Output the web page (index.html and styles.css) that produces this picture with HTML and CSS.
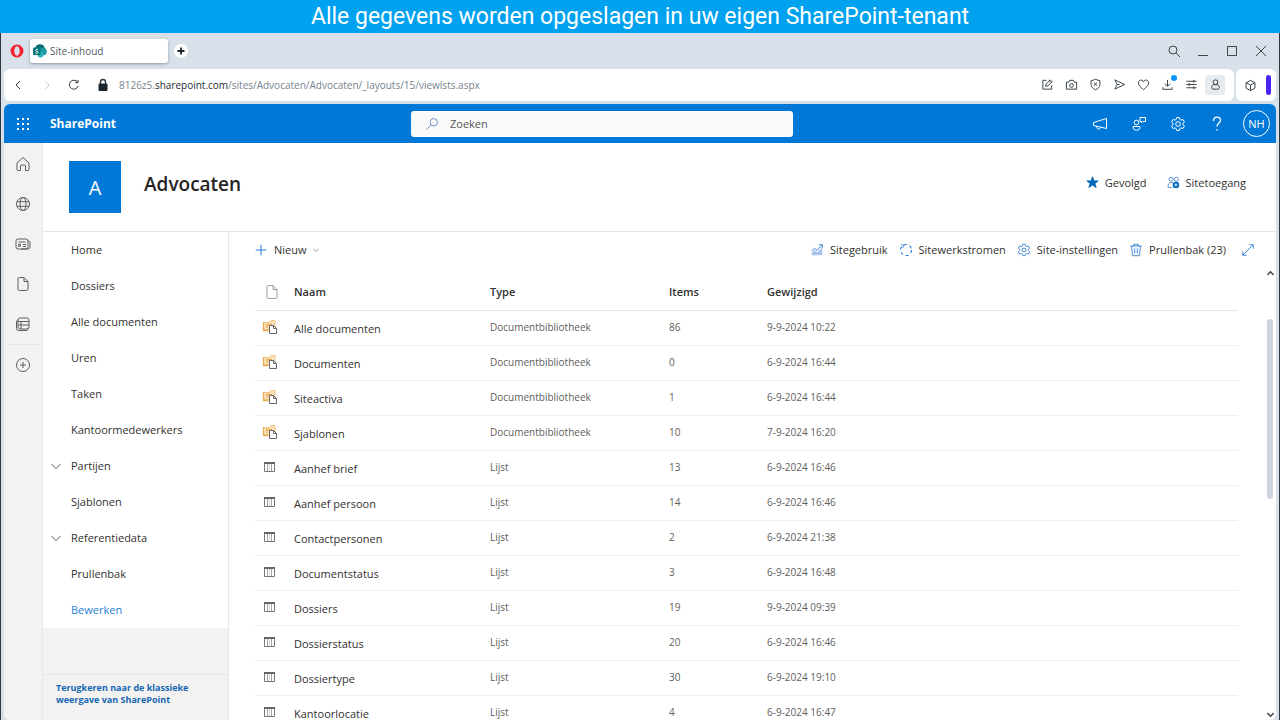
FILE: index.html
```html
<!DOCTYPE html>
<html lang="nl">
<head>
<meta charset="utf-8">
<title>Site-inhoud</title>
<link rel="stylesheet" href="styles.css">
</head>
<body>
<svg class="sprite" aria-hidden="true">
  <symbol id="library" viewBox="0 0 16 16">
    <path d="M1.500 3.500h6l1.500-2h4v9h-11.500z" fill="#fbe3bd" stroke="#f0c583"/>
    <path d="M1.500 3v8.500h5M5 9V5.500h5M7 7.500h3" fill="none" stroke="#e9ad55" stroke-width="1.300"/>
    <path d="M7.500 6.500h4l3 3v5h-7z" fill="#fff" stroke="#666"/>
    <path d="M11.500 6.500v3h3" fill="none" stroke="#666"/>
  </symbol>
  <symbol id="list" viewBox="0 0 16 16">
    <path d="M2.500 3.500h10v9h-10z" fill="#fff" stroke="#777"/>
    <path d="M2 3h11v2H2z" fill="#666" stroke="none"/>
    <path d="M5.500 5v7M9.500 5v7" stroke="#a5a5a5"/>
    <path d="M7.500 5v7" stroke="#dcdcdc"/>
  </symbol>
  <symbol id="page" viewBox="0 0 16 16">
    <path d="M4.500 1.500h4.500l4 4v7.500a1.500 1.500 0 0 1-1.500 1.500h-7A1.500 1.500 0 0 1 3 13V3a1.500 1.500 0 0 1 1.500-1.500zM9 1.500V5.500h4"/>
  </symbol>
  <symbol id="chevron" viewBox="0 0 10 10"><path d="M.5 3l4.500 4.500L9.500 3"/></symbol>
  <symbol id="gear" viewBox="0 0 16 16">
    <path d="M6.700 1.500h2.600l.5 1.900 1.300.7 1.900-.6 1.400 2.300-1.300 1.400v1.600l1.300 1.400-1.400 2.300-1.900-.6-1.300.7-.5 1.900H6.700l-.5-1.900-1.300-.7-1.900.6-1.400-2.300 1.300-1.400V7.200L1.600 5.800 3 3.500l1.900.6 1.300-.7z"/><circle cx="8" cy="8" r="2.300"/>
  </symbol>
</svg>

<header class="banner">Alle gegevens worden opgeslagen in uw eigen SharePoint-tenant</header>

<div class="window">
  <div class="tabbar">
    <svg class="opera" viewBox="0 0 14 14"><path fill-rule="evenodd" d="M7 .5a6.500 6.500 0 1 0 0 13a6.500 6.500 0 1 0 0-13zM7 2.300c1.600 0 2.700 2.100 2.700 4.700S8.600 11.700 7 11.700 4.300 9.600 4.300 7 5.400 2.300 7 2.300z" fill="#f5222f" stroke="none"/></svg>
    <button class="tab">
      <svg viewBox="0 0 14 14" stroke="none"><circle cx="7" cy="5" r="4.800" fill="#036c70" stroke="none"/><circle cx="10" cy="7.500" r="3.800" fill="#1a9ba1" stroke="none"/><circle cx="7.500" cy="10.500" r="3" fill="#2bb3bb" stroke="none"/><rect x="0" y="3.500" width="7.500" height="7.500" rx="1" fill="#03787c" stroke="none"/><path d="M5.200 5.700C4.400 5.200 2.700 5.300 2.700 6.300c0 1.200 2.300.8 2.300 2 0 1-1.500 1.100-2.500.5" stroke="#fff"/></svg>
      <span>Site-inhoud</span>
    </button>
    <button class="newtab" aria-label="Nieuw tabblad"><svg viewBox="0 0 10 10"><path d="M5 1.500v7M1.500 5h7" stroke="#1c262f" stroke-width="1.800"/></svg></button>
    <div class="winctl">
      <button aria-label="Zoeken in tabbladen"><svg viewBox="0 0 14 14"><circle cx="6" cy="6" r="4"/><path d="M9 9l4 4"/></svg></button>
      <button aria-label="Minimaliseren"><svg viewBox="0 0 14 14"><path d="M2 11.500h10"/></svg></button>
      <button aria-label="Maximaliseren"><svg viewBox="0 0 14 14"><path d="M2.500 2.500h9v9h-9z"/></svg></button>
      <button aria-label="Sluiten"><svg viewBox="0 0 14 14"><path d="M2 2l10 10M12 2L2 12"/></svg></button>
    </div>
  </div>

  <div class="addressrow">
    <div class="address">
      <button aria-label="Terug"><svg viewBox="0 0 14 14"><path d="M9 3L5 7l4 4"/></svg></button>
      <button class="dim" aria-label="Vooruit"><svg viewBox="0 0 14 14"><path d="M5 3l4 4-4 4"/></svg></button>
      <button aria-label="Vernieuwen"><svg viewBox="0 0 14 14"><path d="M10.500 4A4.500 4.500 0 1 0 11.200 8M11 2v2.700H8.300"/></svg></button>
      <svg class="lock" viewBox="0 0 14 14"><path d="M3 6h8v6.500H3z" fill="#1c262f" stroke="#1c262f" stroke-linejoin="round"/><path d="M4.500 6V4a2.500 2.500 0 0 1 5 0v2" stroke-width="1.400"/></svg>
      <span class="url">8126z5.<b>sharepoint.com</b>/sites/Advocaten/Advocaten/_layouts/15/viewlsts.aspx</span>
      <div class="tools">
        <button aria-label="Notitie"><svg viewBox="0 0 14 14"><path d="M6 2.500H2v9.500h9.500V8M5 9l.5-2.500 4.500-4.500 2 2-4.500 4.500zM9 3l2 2"/></svg></button>
        <button aria-label="Momentopname"><svg viewBox="0 0 14 14"><path d="M1.500 4.500H4L5 2.500h4l1 2h2.500v7.500h-11z" stroke-linejoin="round"/><circle cx="7" cy="8" r="2"/></svg></button>
        <button aria-label="Bescherming"><svg viewBox="0 0 14 14"><path d="M7 1.500L11.800 3v4c0 3-2.500 4.700-4.800 5.700C4.700 11.700 2.200 10 2.200 7V3zM5.300 5l3.400 3.400M8.700 5L5.300 8.400"/></svg></button>
        <button aria-label="Delen"><svg viewBox="0 0 14 14"><path d="M2 2l10.500 5L2 12l2.500-5zM4.500 7H7" stroke-linejoin="round"/></svg></button>
        <button aria-label="Favoriet"><svg viewBox="0 0 14 14"><path d="M7 12.500C4 10 1.500 8 1.500 5.200c0-3.200 4-4.200 5.500-1.200 1.500-3 5.500-2 5.500 1.200C12.500 8 10 10 7 12.500z"/></svg></button>
        <button class="download" aria-label="Downloads"><svg viewBox="0 0 14 14"><path d="M7 2v6.500M4 6l3 3 3-3M2 10v2.200h10V10"/></svg></button>
        <button aria-label="Instellingen"><svg viewBox="0 0 14 14"><path d="M1.500 3.500h11M1.500 7h11M1.500 10.500h11M9.500 2v3M4.500 5.500v3M9.500 9v3"/></svg></button>
        <button class="profile" aria-label="Profiel"><svg viewBox="0 0 14 14"><circle cx="7" cy="4.500" r="2.500"/><path d="M4.500 7.200h5c2.200 1.300 2 4.800 0 4.800h-5c-2 0-2.200-3.500 0-4.800z"/></svg></button>
      </div>
    </div>
    <div class="extras">
      <button aria-label="Extensies"><svg viewBox="0 0 14 14"><path d="M7 1.500l4.800 2.500v5.800L7 12.500 2.200 9.800V4zM2.200 4L7 6.500 11.800 4M7 6.500v6" stroke-linejoin="round"/></svg></button>
      <span class="strip"></span>
    </div>
  </div>

  <div class="app">
    <div class="suite">
      <button class="waffle" aria-label="Apps"><svg viewBox="0 0 14 14"><path fill="#fff" stroke="none" d="M1 1h2v2H1zM6 1h2v2H6zM11 1h2v2h-2zM1 6h2v2H1zM6 6h2v2H6zM11 6h2v2h-2zM1 11h2v2H1zM6 11h2v2H6zM11 11h2v2h-2z"/></svg></button>
      <a class="brand" href="#">SharePoint</a>
      <label class="search">
        <svg viewBox="0 0 16 16"><circle cx="10" cy="6" r="4.200"/><path d="M7 9l-5.500 5.500"/></svg>
        <input type="search" placeholder="Zoeken" aria-label="Zoeken">
      </label>
      <div class="suite-actions">
        <button aria-label="Aankondigingen"><svg viewBox="0 0 16 16"><path d="M14.500 2.500v10L1.500 9.500v-3zM4.500 10.500c0 3 3.500 3.500 4 1" stroke-linejoin="round"/></svg></button>
        <button aria-label="Feedback"><svg viewBox="0 0 16 16"><circle cx="5.500" cy="6.500" r="2.300"/><path d="M2 10.500h7c.8 5-7.800 5-7 0zM9 1.500h5.500v4H12l-1.500 1.500V5.500H9z"/></svg></button>
        <button aria-label="Instellingen"><svg viewBox="0 0 16 16"><use href="#gear"/></svg></button>
        <button aria-label="Help"><svg viewBox="0 0 16 16"><path d="M4.500 5c0-5 7-5 7-.8 0 2.800-3.500 3-3.500 6.300M8 13v1.500" stroke-width="1.300"/></svg></button>
        <button class="avatar">NH</button>
      </div>
    </div>

    <div class="body">
      <nav class="rail" aria-label="Apps">
        <a href="#" aria-label="Start"><svg viewBox="0 0 16 16"><path d="M2 7l6-5.500L14 7v6.500a1 1 0 0 1-1 1h-2.500V10a1 1 0 0 0-1-1h-3a1 1 0 0 0-1 1v4.500H3a1 1 0 0 1-1-1z"/></svg></a>
        <a href="#" aria-label="Sites"><svg viewBox="0 0 16 16"><circle cx="8" cy="8" r="6.500"/><ellipse cx="8" cy="8" rx="3" ry="6.500"/><path d="M2 5.700h12M2 10.300h12"/></svg></a>
        <a href="#" aria-label="Nieuws"><svg viewBox="0 0 16 16"><rect x="1" y="3" width="12" height="10" rx="2"/><path d="M13 5h.5A1.500 1.500 0 0 1 15 6.500V11a2 2 0 0 1-2 2H6M3.500 6h7M8 8.500h3M8 10.500h3M3.500 8.300h2v2h-2z"/></svg></a>
        <a href="#" aria-label="Bestanden"><svg viewBox="0 0 16 16"><use href="#page"/></svg></a>
        <a href="#" aria-label="Lijsten"><svg viewBox="0 0 16 16"><rect x="3" y="2" width="11" height="11" rx="2"/><path d="M3 5.500h11M3 9h11M6 5.500V13M3 4a2 2 0 0 0-1.500 2v6.500a2 2 0 0 0 2 2H11a2 2 0 0 0 2-1.500"/></svg></a>
        <a class="create" href="#" aria-label="Maken"><svg viewBox="0 0 16 16"><circle cx="8" cy="8" r="6.500"/><path d="M8 5v6M5 8h6"/></svg></a>
      </nav>

      <div class="site">
        <div class="sitehead">
          <div class="logo">A</div>
          <h1>Advocaten</h1>
          <div class="siteactions">
            <button><svg viewBox="0 0 16 16"><path d="M8 1l2 5h5l-4 3.200 1.500 5L8 11.200l-4.500 3 1.500-5L1 6h5z" fill="#0067b8" stroke="#0067b8"/></svg>Gevolgd</button>
            <button><svg viewBox="0 0 16 16"><circle cx="5" cy="4" r="2.500"/><circle cx="11.500" cy="4" r="2.500"/><path d="M6.500 14H1.500c-1-3.500 1-6 4-6 1 0 2 .3 2.500 1"/><circle cx="11" cy="11" r="4" fill="#0067b8" stroke="none"/><path d="M11 9v4M9 11h4" stroke="#fff"/></svg>Sitetoegang</button>
          </div>
        </div>

        <div class="columns">
          <aside class="side">
            <nav class="sidenav" aria-label="Site">
              <a href="#">Home</a>
              <a href="#">Dossiers</a>
              <a href="#">Alle documenten</a>
              <a href="#">Uren</a>
              <a href="#">Taken</a>
              <a href="#">Kantoormedewerkers</a>
              <a href="#"><svg><use href="#chevron"/></svg>Partijen</a>
              <a href="#">Sjablonen</a>
              <a href="#"><svg><use href="#chevron"/></svg>Referentiedata</a>
              <a href="#">Prullenbak</a>
              <a class="edit" href="#">Bewerken</a>
            </nav>
            <div class="classic"><a href="#">Terugkeren naar de klassieke weergave van SharePoint</a></div>
          </aside>

          <main class="main">
            <div class="commands">
              <button class="new"><svg viewBox="0 0 16 16"><path d="M8 2v12M2 8h12" stroke-width="1.200"/></svg>Nieuw<svg class="caret"><use href="#chevron"/></svg></button>
              <div class="commands-right">
                <button><svg viewBox="0 0 16 16"><path d="M2 14V11l3-3 3 2.500L14 5v9z" fill="#a9c3ef" stroke="none"/><path d="M2 9l3-3 3 2.500L14 2M10 2h4v4"/></svg>Sitegebruik</button>
                <button><svg viewBox="0 0 16 16"><circle cx="8" cy="8" r="6.300" stroke-width="1.300" stroke-dasharray="3.600 3"/><path d="M2.500 1.500L5.500 2.500 4.500 5.500"/></svg>Sitewerkstromen</button>
                <button><svg viewBox="0 0 16 16"><use href="#gear"/></svg>Site-instellingen</button>
                <button><svg viewBox="0 0 16 16"><path d="M1.500 3.500h13M5.500 3.500v-2h5v2M3 3.500l1 11h8l1-11M6.500 6v6M9.500 6v6"/></svg>Prullenbak (23)</button>
                <button class="expand" aria-label="Uitvouwen"><svg viewBox="0 0 16 16"><path d="M2 14L14 2M9.500 2H14v4.500M2 9.500V14h4.500"/></svg></button>
              </div>
            </div>
            <div class="scroller">
              <table>
                <thead><tr><th class="c-icon"><svg class="pageicon"><use href="#page"/></svg></th><th class="c-name">Naam</th><th class="c-type">Type</th><th class="c-items">Items</th><th>Gewijzigd</th></tr></thead>
                <tbody>
                  <tr><td><svg><use href="#library"/></svg></td><td><a href="#">Alle documenten</a></td><td>Documentbibliotheek</td><td>86</td><td>9-9-2024 10:22</td></tr>
                  <tr><td><svg><use href="#library"/></svg></td><td><a href="#">Documenten</a></td><td>Documentbibliotheek</td><td>0</td><td>6-9-2024 16:44</td></tr>
                  <tr><td><svg><use href="#library"/></svg></td><td><a href="#">Siteactiva</a></td><td>Documentbibliotheek</td><td>1</td><td>6-9-2024 16:44</td></tr>
                  <tr><td><svg><use href="#library"/></svg></td><td><a href="#">Sjablonen</a></td><td>Documentbibliotheek</td><td>10</td><td>7-9-2024 16:20</td></tr>
                  <tr><td><svg><use href="#list"/></svg></td><td><a href="#">Aanhef brief</a></td><td>Lijst</td><td>13</td><td>6-9-2024 16:46</td></tr>
                  <tr><td><svg><use href="#list"/></svg></td><td><a href="#">Aanhef persoon</a></td><td>Lijst</td><td>14</td><td>6-9-2024 16:46</td></tr>
                  <tr><td><svg><use href="#list"/></svg></td><td><a href="#">Contactpersonen</a></td><td>Lijst</td><td>2</td><td>6-9-2024 21:38</td></tr>
                  <tr><td><svg><use href="#list"/></svg></td><td><a href="#">Documentstatus</a></td><td>Lijst</td><td>3</td><td>6-9-2024 16:48</td></tr>
                  <tr><td><svg><use href="#list"/></svg></td><td><a href="#">Dossiers</a></td><td>Lijst</td><td>19</td><td>9-9-2024 09:39</td></tr>
                  <tr><td><svg><use href="#list"/></svg></td><td><a href="#">Dossierstatus</a></td><td>Lijst</td><td>20</td><td>6-9-2024 16:46</td></tr>
                  <tr><td><svg><use href="#list"/></svg></td><td><a href="#">Dossiertype</a></td><td>Lijst</td><td>30</td><td>6-9-2024 19:10</td></tr>
                  <tr><td><svg><use href="#list"/></svg></td><td><a href="#">Kantoorlocatie</a></td><td>Lijst</td><td>4</td><td>6-9-2024 16:47</td></tr>
                </tbody>
              </table>
              <div class="scrollbar">
                <svg class="up"><use href="#chevron"/></svg>
                <span class="thumb"></span>
                <svg class="down"><use href="#chevron"/></svg>
              </div>
            </div>
          </main>
        </div>
      </div>
    </div>
  </div>
</div>
</body>
</html>
```
FILE: styles.css
```css
* { box-sizing: border-box; }
body {
  margin: 0;
  height: 100vh;
  display: flex;
  flex-direction: column;
  overflow: hidden;
  font-family: "Open Sans", "Noto Sans", sans-serif;
  font-size: 11px;
  color: #323130;
}
button { border: 0; background: none; padding: 0; font: inherit; color: inherit; display: flex; align-items: center; justify-content: center; }
a { color: inherit; text-decoration: none; }
svg { width: 14px; height: 14px; flex: none; fill: none; stroke: currentColor; display: block; }
.sprite { position: absolute; width: 0; height: 0; }

.banner {
  flex: none;
  height: 33px;
  background: #00a2ef;
  color: #fff;
  font-family: Roboto, sans-serif;
  font-size: 23px;
  line-height: 33px;
  text-align: center;
}

.window {
  flex: 1;
  min-height: 0;
  display: flex;
  flex-direction: column;
  background: #d8e1e9;
  border: solid #2f3740;
  border-width: 0 1px;
  padding: 0 3px;
}
.tabbar { flex: none; height: 36px; display: flex; align-items: center; padding: 0 1px 0 6px; }
.tab {
  width: 138px;
  height: 24px;
  margin: 0 6px;
  padding: 0 3px;
  gap: 3px;
  justify-content: flex-start;
  background: #fff;
  border-radius: 3px;
  box-shadow: 0 1px 3px #8b98a5;
  color: #555b62;
  font-size: 10px;
}
.newtab { width: 14px; height: 14px; border-radius: 50%; background: #fff; }
.newtab svg { width: 10px; height: 10px; }
.winctl { margin-left: auto; display: flex; gap: 1px; color: #3c444c; }
.winctl button { width: 28px; height: 24px; }

.addressrow { flex: none; height: 32px; display: flex; gap: 2px; color: #30383f; }
.address { flex: 1; display: flex; align-items: center; background: #fff; border-radius: 6px; padding: 0 9px 1px 0; }
.address > button { width: 28px; height: 24px; }
.address .dim { color: #c3c8cd; width: 30px; }
.address > button:nth-child(3) { width: 24px; }
.lock { margin: 0 9px 0 10px; }
.url { color: #75838f; font-size: 10px; }
.url b { font-weight: 400; color: #222b33; }
.tools { margin-left: auto; display: flex; align-items: center; gap: 4px; }
.tools button { width: 20px; height: 20px; }
.tools svg, .extras svg { width: 13px; height: 13px; }
.tools .profile { background: #e6ebef; border-radius: 3px; }
.download { position: relative; }
.download::after { content: ""; position: absolute; right: 0; top: 0; width: 6px; height: 6px; border-radius: 50%; background: #0a95ff; }
.extras { width: 40px; display: flex; align-items: center; justify-content: space-between; background: #fff; border-radius: 6px; padding: 0 5px 0 8px; }
.strip { width: 5px; height: 20px; border-radius: 3px; background: #4b22f4; }

.app { flex: 1; min-height: 0; margin-top: 3px; display: flex; flex-direction: column; border-radius: 6px; overflow: hidden; background: #fff; }
.suite { flex: none; height: 39px; display: grid; grid-template-columns: 46px minmax(80px, 361px) minmax(120px, 382px) 1fr; align-items: center; background: #0078d7; color: #fff; }
.waffle { width: 38px; height: 38px; }
.brand { font-size: 12px; font-weight: 700; }
.search { height: 26px; display: flex; align-items: center; gap: 11px; padding: 0 14px; background: #fafafa; border-radius: 3px; color: #5b82c4; }
.search input { flex: 1; min-width: 0; border: 0; padding: 0; outline: 0; background: none; font: inherit; color: #555; }
.search input::placeholder { color: #555; opacity: 1; }
.suite-actions { display: flex; justify-content: flex-end; align-items: center; gap: 9px; padding-right: 6px; }
.suite-actions button { width: 30px; height: 30px; }
.suite-actions svg { width: 16px; height: 16px; }
.suite-actions .avatar { width: 27px; height: 27px; border: 1px solid #fff; border-radius: 50%; margin-left: 2px; }

.body { flex: 1; min-height: 0; display: flex; }
.rail { flex: none; width: 39px; background: #f3f2f1; color: #605e5c; border-right: 1px solid #eae9e8; }
.rail a { height: 40px; display: flex; align-items: center; justify-content: center; padding-top: 1px; }
.rail svg { width: 16px; height: 16px; }
.rail .create { margin: 1px 3px 0; border-top: 1px solid #e8e6e4; }
.site { flex: 1; min-width: 0; display: flex; flex-direction: column; }
.sitehead { flex: none; height: 89px; display: flex; align-items: center; padding: 0 30px 0 26px; border-bottom: 1px solid #e5e4e3; }
.logo { width: 52px; height: 52px; background: #0078d7; color: #fff; font-size: 20px; line-height: 54px; text-align: center; }
h1 { margin: 0 0 6px 23px; font-size: 19px; font-weight: 600; line-height: 26px; color: #252423; }
.siteactions { margin: 0 0 10px auto; display: flex; gap: 20px; }
.siteactions button { gap: 6px; }
.siteactions svg { width: 13px; height: 13px; color: #3d7cc9; }

.columns { flex: 1; min-height: 0; display: flex; }
.side { flex: none; width: 186px; display: flex; flex-direction: column; background: #f3f2f1; border-right: 1px solid #eae9e8; }
.sidenav { background: #fff; }
.sidenav a { height: 36px; display: flex; align-items: center; padding: 0 0 1px 28px; position: relative; }
.sidenav svg { position: absolute; left: 8px; width: 10px; height: 10px; color: #605e5c; }
.sidenav .edit { color: #1f7fd9; }
.classic { margin-top: auto; height: 46px; border-top: 1px solid #e6e5e4; padding: 7px 13px; font-size: 9px; line-height: 12px; font-weight: 700; color: #1466b3; }

.main { flex: 1; min-width: 0; display: flex; flex-direction: column; }
.commands { flex: none; height: 35px; display: flex; align-items: center; justify-content: space-between; padding: 0 21px 0 25px; }
.commands svg { color: #2b7cd3; }
.commands button { gap: 6px; }
.commands .caret { width: 6px; height: 6px; color: #605e5c; }
.commands-right { display: flex; gap: 11px; }
.commands .expand { margin-left: 4px; }
.scroller { flex: 1; min-height: 0; display: flex; justify-content: space-between; }
table { flex: 1; align-self: flex-start; margin: 7px 0 0 26px; border-collapse: collapse; table-layout: fixed; width: 100%; }
th, td { height: 35px; padding: 0; text-align: left; vertical-align: top; border-bottom: 1px solid #f0efee; line-height: 15px; }
th { height: 36px; padding-top: 10px; font-weight: 600; border-color: #e8e7e6; }
td { padding-top: 9px; font-size: 10px; color: #605e5c; }
td:first-child { padding: 8px 0 0 7px; }
td:first-child svg { width: 16px; height: 16px; }
td:nth-child(2) { padding-top: 10px; font-size: 11px; color: #323130; }
th.c-icon { width: 39px; padding-left: 9px; }
.pageicon { color: #a09e9c; width: 16px; height: 16px; }
.c-name { width: 196px; }
.c-type { width: 179px; }
.c-items { width: 98px; }
.scrollbar { flex: none; width: 12px; margin-left: 26px; display: flex; flex-direction: column; align-items: center; padding: 3px 0 2px; color: #444; }
.scrollbar svg { width: 7px; height: 7px; stroke-width: 2; }
.scrollbar .up { transform: rotate(180deg); }
.scrollbar .down { margin-top: auto; }
.thumb { width: 6px; height: 180px; margin-top: 42px; border-radius: 3px; background: #ccd5dd; }
```
